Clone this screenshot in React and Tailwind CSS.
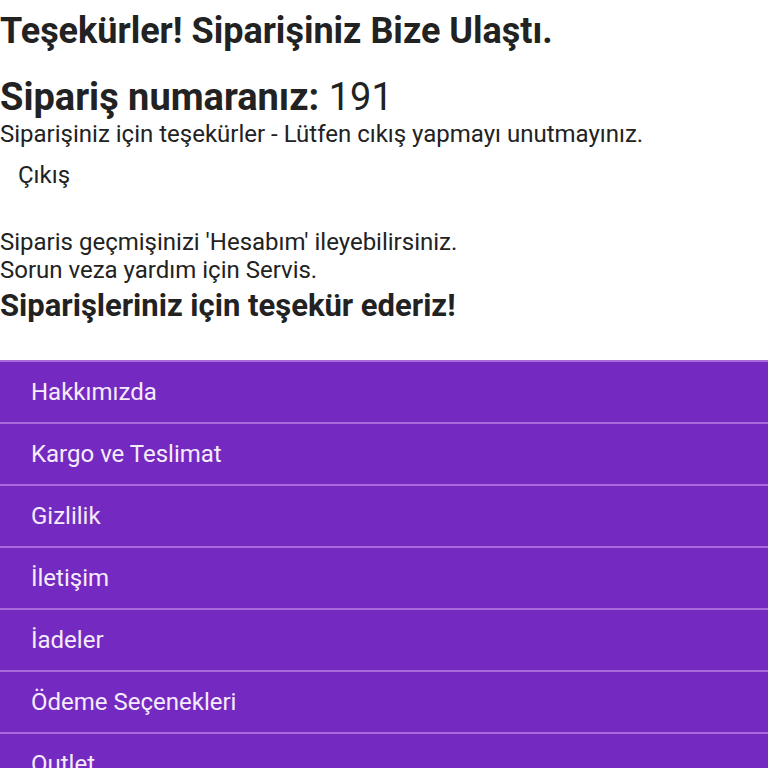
import React from 'react';

const links = ['Hakkımızda', 'Kargo ve Teslimat', 'Gizlilik', 'İletişim', 'İadeler', 'Ödeme Seçenekleri', 'Outlet'];

export default function App() {
  return (
    <div className="min-h-[768px] bg-white text-[#222] font-['Roboto',sans-serif]">
      <h1 className="text-[36px] font-bold leading-[42px] pt-[10px]">Teşekürler! Siparişiniz Bize Ulaştı.</h1>
      <h2 className="text-[38px] leading-[44px] mt-[23px]">
        <span className="font-bold">Sipariş numaranız:</span> 191
      </h2>
      <p className="text-[24px] leading-[28px] mt-[1px]">Siparişiniz için teşekürler - Lütfen cıkış yapmayı unutmayınız.</p>
      <div className="text-[24px] leading-[28px] mt-[13px] pl-[18px]">Çıkış</div>
      <div className="mt-[39px] text-[24px] leading-[28px]">
        <p>Siparis geçmişinizi 'Hesabım' ileyebilirsiniz.</p>
        <p>Sorun veza yardım için Servis.</p>
      </div>
      <h3 className="text-[31px] font-bold leading-[36px] mt-[4px]">Siparişleriniz için teşekür ederiz!</h3>
      <ul className="mt-[36px] bg-[#7429c1] border-t-2 border-[#a768dc]">
        {links.map((l) => (
          <li key={l} className="h-[62px] border-b-2 border-[#a768dc] flex items-center pl-[31px] text-[24px] leading-[28px] text-[#f5ecfb]">
            {l}
          </li>
        ))}
      </ul>
    </div>
  );
}
